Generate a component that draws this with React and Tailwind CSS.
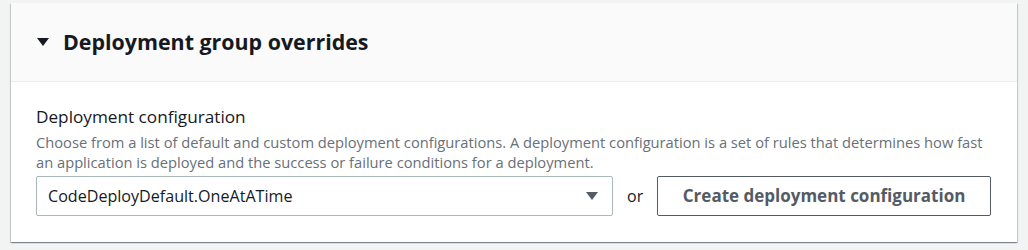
export default function App() {
  return (
    <div className="w-[1028px] h-[250px] bg-[#f2f3f3] pt-[3px] pl-[11px] pr-[11px]" style={{ fontFamily: '"Open Sans", "Noto Sans", sans-serif' }}>
      <div className="w-[1006px] bg-white shadow-[0_1px_1px_0_rgba(0,28,36,0.3),1px_1px_1px_0_rgba(0,28,36,0.15),-1px_1px_1px_0_rgba(0,28,36,0.15)]">
        <div className="h-[79px] bg-[#fafafa] border-b border-[#eaeded] flex items-center pl-[26px]">
          <svg width="12" height="10" viewBox="0 0 12 10" className="mr-[14px]">
            <polygon points="0,1 12,1 6,9" fill="#16191f" />
          </svg>
          <span className="text-[21.4px] font-bold text-[#16191f] leading-[28px]">Deployment group overrides</span>
        </div>
        <div className="pl-[25px] pr-[26px] pt-[24px] pb-[26px]">
          <div className="text-[17.2px] text-[#16191f] leading-[22px]">Deployment configuration</div>
          <div className="text-[14.7px] text-[#687078] leading-[20px] mt-[4px]">
            Choose from a list of default and custom deployment configurations. A deployment configuration is a set of rules that determines how fast an application is deployed and the success or failure conditions for a deployment.
          </div>
          <div className="flex items-center mt-[4px]">
            <div className="w-[577px] h-[40px] border border-[#aab7b8] rounded-[2px] flex items-center justify-between pl-[11px] pr-[14px]">
              <span className="text-[16.1px] text-[#16191f]">CodeDeployDefault.OneAtATime</span>
              <svg width="12" height="10" viewBox="0 0 12 10">
                <polygon points="0,1 12,1 6,9" fill="#545b64" />
              </svg>
            </div>
            <span className="text-[16px] text-[#16191f] mx-[14px]">or</span>
            <button className="h-[40px] flex-1 border border-[#545b64] rounded-[2px] text-[17px] font-bold text-[#545b64] bg-white">
              Create deployment configuration
            </button>
          </div>
        </div>
      </div>
    </div>
  );
}
